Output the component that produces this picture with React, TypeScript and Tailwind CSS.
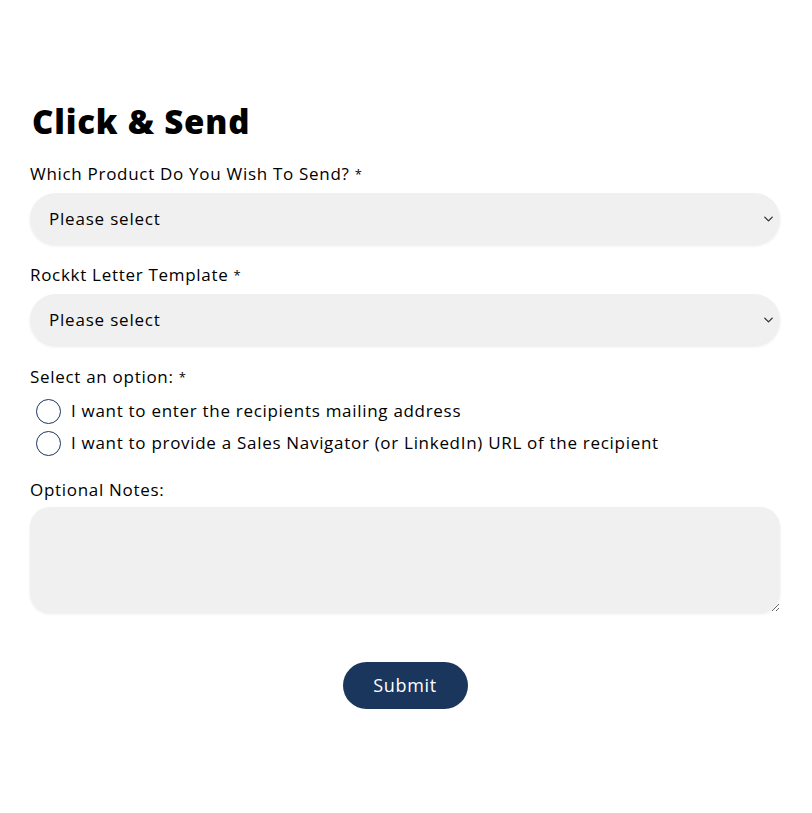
import { ChevronDown } from "lucide-react"

function SelectField({ label }: { label: string }) {
  return (
    <div className="flex flex-col">
      <label className="text-[17px] leading-[22px] text-black mb-[8px]">
        {label} <span className="text-[13px] align-top">*</span>
      </label>
      <div className="relative">
        <select className="w-full h-[51px] appearance-none rounded-full bg-[#f0f0f0] pl-[19px] pr-10 text-[17px] tracking-[0.8px] text-black shadow-[0_2px_3px_rgba(0,0,0,0.08)] outline-none">
          <option>Please select</option>
        </select>
        <ChevronDown
          className="absolute right-[4px] top-1/2 -translate-y-1/2 w-[15px] h-[15px] text-[#333] pointer-events-none"
          strokeWidth={2.2}
        />
      </div>
    </div>
  )
}

function Radio({ text }: { text: string }) {
  return (
    <label className="flex items-center gap-[10px] h-[32px]">
      <span className="ml-[6px] w-[25px] h-[25px] rounded-full border-[1.5px] border-[#1b365d] bg-white shrink-0" />
      <span className="text-[17px] text-black">{text}</span>
    </label>
  )
}

export default function App() {
  return (
    <main
      className="min-h-screen bg-white pl-[30px] pr-[32px] pt-[100px] tracking-[0.7px]"
      style={{ fontFamily: "'Open Sans', 'Liberation Sans', sans-serif" }}
    >
      <h1 className="text-[33px] leading-[44px] font-extrabold text-black ml-[2px] tracking-[0.8px]">
        Click &amp; Send
      </h1>

      <div className="mt-[19px] flex flex-col gap-[20px]">
        <SelectField label="Which Product Do You Wish To Send?" />
        <SelectField label="Rockkt Letter Template" />

        <div className="flex flex-col mt-[1px]">
          <label className="text-[17px] leading-[22px] text-black mb-[7px]">
            Select an option: <span className="text-[13px] align-top">*</span>
          </label>
          <Radio text="I want to enter the recipients mailing address" />
          <Radio text="I want to provide a Sales Navigator (or LinkedIn) URL of the recipient" />
        </div>

        <div className="flex flex-col">
          <label className="text-[17px] leading-[22px] text-black mb-[6px]">Optional Notes:</label>
          <textarea className="w-full h-[105px] rounded-[20px] bg-[#f0f0f0] shadow-[0_2px_3px_rgba(0,0,0,0.08)] outline-none resize-y p-4" />
        </div>
      </div>

      <div className="flex justify-center mt-[50px]">
        <button className="w-[125px] h-[47px] rounded-full bg-[#1b365d] text-white text-[18px]">
          Submit
        </button>
      </div>
    </main>
  )
}
